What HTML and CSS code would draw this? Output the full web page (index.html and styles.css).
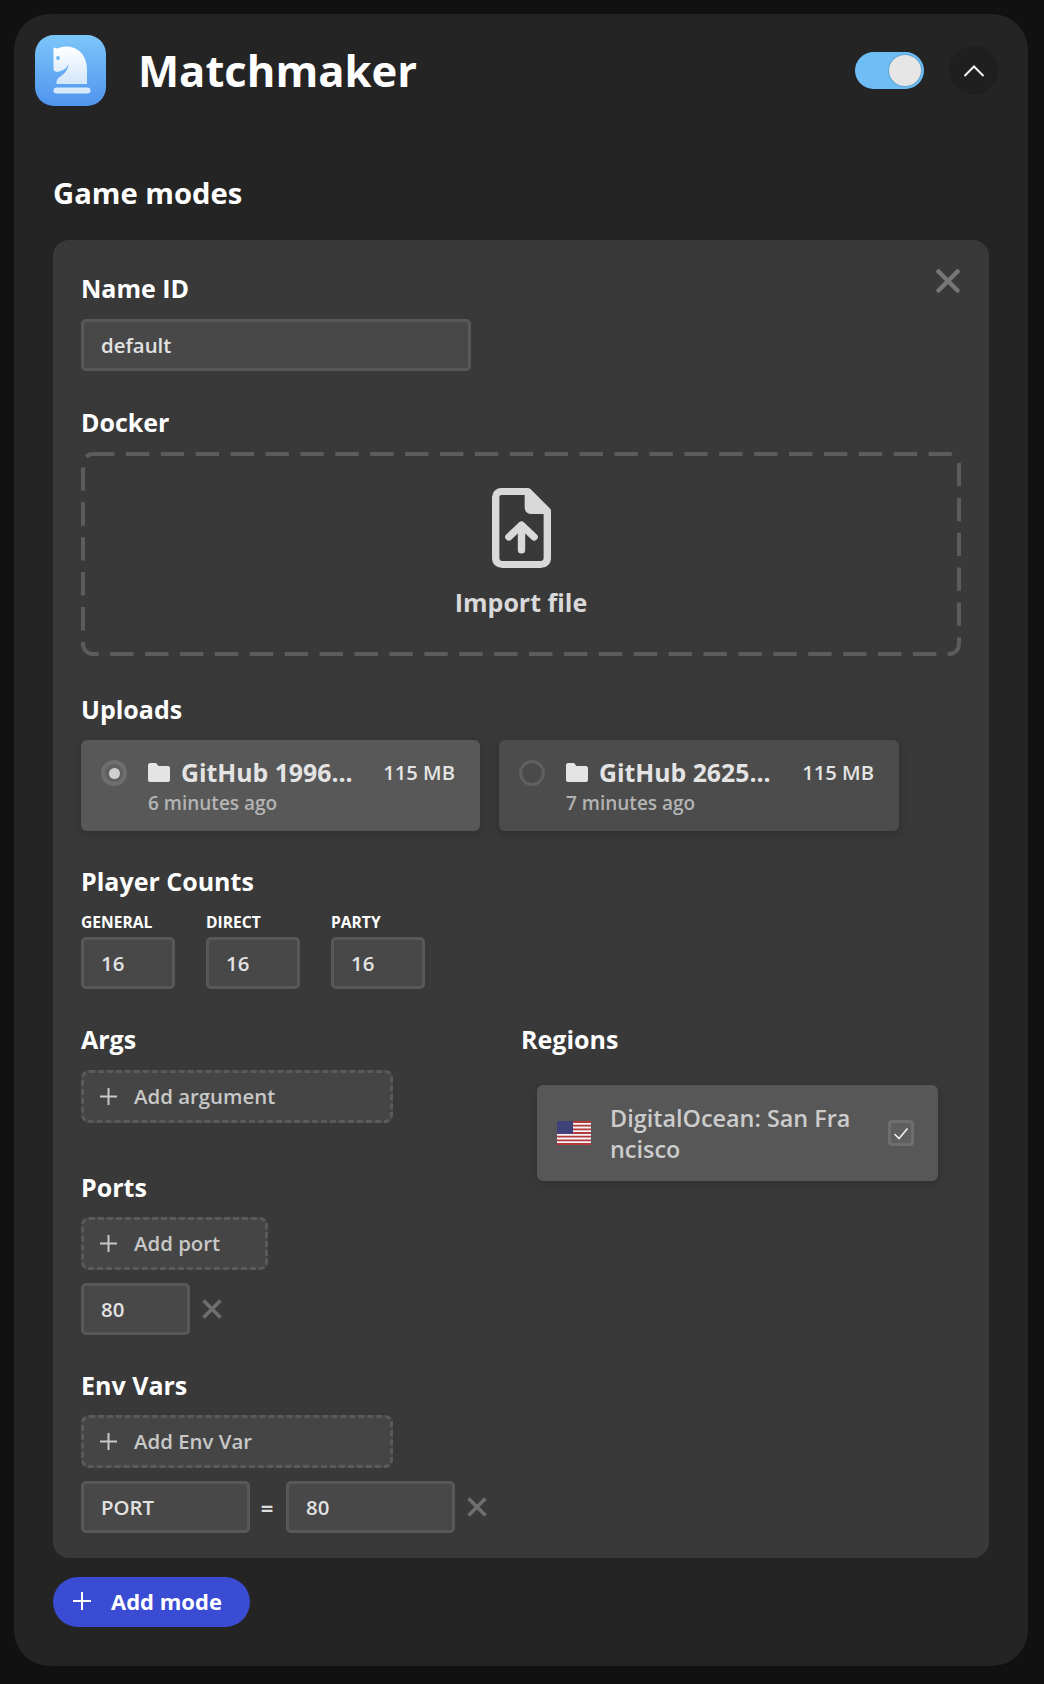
FILE: index.html
```html
<!DOCTYPE html>
<html lang="en">
<head>
    <meta charset="UTF-8">
    <title>Matchmaker</title>
    <link rel="stylesheet" href="styles.css">
</head>
<body>

<div class="panel">
    <div class="header">
        <svg class="logo" viewBox="0 0 71 71">
            <defs>
                <linearGradient id="logoBg" x1="0" y1="0" x2="0" y2="1">
                    <stop offset="0" stop-color="#7cc6fa"/>
                    <stop offset="1" stop-color="#4f94ee"/>
                </linearGradient>
                <linearGradient id="logoFg" x1="0" y1="0" x2="0" y2="1">
                    <stop offset="0" stop-color="#ffffff"/>
                    <stop offset="1" stop-color="#d3e6fb"/>
                </linearGradient>
            </defs>
            <rect width="71" height="71" rx="19" fill="url(#logoBg)"/>
            <path fill="url(#logoFg)" d="M18.5 12.5 L22.5 13.5 C25 12.2 28 11.5 31 11.5 C44 11.5 52 21 52 35 V49 H21.5 V47.5 C21.5 42.5 27 41 30 37.5 C32 35.2 33.3 32.5 33.5 29 C32 32.8 29.3 35 26 35.8 C24 37 22 37.2 20.5 36.5 C19 36 18.5 35 18.5 33.5 Z"/>
            <circle cx="23" cy="23" r="1.9" fill="#6db4f5"/>
            <rect x="18.5" y="52.5" width="37" height="6" rx="3" fill="#d8e9fc"/>
        </svg>
        <h1>Matchmaker</h1>
        <div class="toggle"><span class="knob"></span></div>
        <button class="collapse">
            <svg width="22" height="14" viewBox="0 0 22 14"><path d="M1.5 12 L11 2.5 L20.5 12" fill="none" stroke="#f2f2f2" stroke-width="2"/></svg>
        </button>
    </div>

    <h2>Game modes</h2>

    <div class="card">
        <svg class="close-card" width="24" height="24" viewBox="0 0 24 24"><path d="M2.5 2.5 L21.5 21.5 M21.5 2.5 L2.5 21.5" stroke="#777" stroke-width="4.5" stroke-linecap="round"/></svg>

        <label class="title">Name ID</label>
        <input class="text-input name-input" type="text" value="default">

        <label class="title docker-title">Docker</label>
        <div class="drop">
            <svg class="drop-border" width="880" height="204" viewBox="0 0 880 204">
                <rect x="2" y="2" width="876" height="200" rx="10" fill="none" stroke="#5c5c5c" stroke-width="4" stroke-dasharray="23.4 11.5" stroke-dashoffset="2"/>
            </svg>
            <svg class="file-icon" width="59" height="80" viewBox="0 0 56 80" preserveAspectRatio="none">
                <path d="M9 3.5 H34 L52.5 23 V70 C52.5 74 50 76.5 46 76.5 H10 C6 76.5 3.5 74 3.5 70 V9 C3.5 5.5 6 3.5 9 3.5 Z" fill="none" stroke="#d9d9d9" stroke-width="7" stroke-linejoin="round"/>
                <path d="M32 3 V19 C32 23 34 25 38 25 H53 Z" fill="#d9d9d9" stroke="#d9d9d9" stroke-width="2" stroke-linejoin="round"/>
                <path d="M28 62 V37 M16 49 L28 37 L40 49" fill="none" stroke="#d9d9d9" stroke-width="7" stroke-linecap="round" stroke-linejoin="round"/>
            </svg>
            <div class="drop-text">Import file</div>
        </div>

        <label class="title uploads-title">Uploads</label>
        <div class="uploads">
            <div class="upload selected">
                <span class="radio"><span class="dot"></span></span>
                <div class="upload-body">
                    <div class="upload-top">
                        <svg class="folder" width="22" height="19" viewBox="0 0 22 19"><path d="M2 0 H8 L10.5 3 H20 C21 3 22 4 22 5 V17 C22 18 21 19 20 19 H2 C1 19 0 18 0 17 V2 C0 1 1 0 2 0 Z" fill="#e4e4e4"/></svg>
                        <span class="upload-name">GitHub 1996...</span>
                        <span class="upload-size">115 MB</span>
                    </div>
                    <div class="upload-time">6 minutes ago</div>
                </div>
            </div>
            <div class="upload">
                <span class="radio"></span>
                <div class="upload-body">
                    <div class="upload-top">
                        <svg class="folder" width="22" height="19" viewBox="0 0 22 19"><path d="M2 0 H8 L10.5 3 H20 C21 3 22 4 22 5 V17 C22 18 21 19 20 19 H2 C1 19 0 18 0 17 V2 C0 1 1 0 2 0 Z" fill="#e4e4e4"/></svg>
                        <span class="upload-name">GitHub 2625...</span>
                        <span class="upload-size">115 MB</span>
                    </div>
                    <div class="upload-time">7 minutes ago</div>
                </div>
            </div>
        </div>

        <label class="title counts-title">Player Counts</label>
        <div class="counts">
            <div class="count">
                <div class="count-label">GENERAL</div>
                <input class="text-input count-input" type="text" value="16">
            </div>
            <div class="count">
                <div class="count-label">DIRECT</div>
                <input class="text-input count-input" type="text" value="16">
            </div>
            <div class="count">
                <div class="count-label">PARTY</div>
                <input class="text-input count-input" type="text" value="16">
            </div>
        </div>

        <div class="columns">
            <div class="col-left">
                <label class="title">Args</label>
                <button class="add-btn wide">
                    <svg width="17" height="17" viewBox="0 0 17 17"><path d="M8.5 0 V17 M0 8.5 H17" stroke="#c8c8c8" stroke-width="2"/></svg>
                    Add argument
                </button>

                <label class="title add-title ports-title">Ports</label>
                <button class="add-btn narrow">
                    <svg width="17" height="17" viewBox="0 0 17 17"><path d="M8.5 0 V17 M0 8.5 H17" stroke="#c8c8c8" stroke-width="2"/></svg>
                    Add port
                </button>
                <div class="row">
                    <input class="text-input port-input" type="text" value="80">
                    <svg class="remove" width="20" height="20" viewBox="0 0 20 20"><path d="M1.5 1.5 L18.5 18.5 M18.5 1.5 L1.5 18.5" stroke="#6f6f6f" stroke-width="3.6"/></svg>
                </div>

                <label class="title add-title env-title">Env Vars</label>
                <button class="add-btn wide">
                    <svg width="17" height="17" viewBox="0 0 17 17"><path d="M8.5 0 V17 M0 8.5 H17" stroke="#c8c8c8" stroke-width="2"/></svg>
                    Add Env Var
                </button>
                <div class="row">
                    <input class="text-input env-input" type="text" value="PORT">
                    <span class="equals">=</span>
                    <input class="text-input env-input" type="text" value="80">
                    <svg class="remove" width="20" height="20" viewBox="0 0 20 20"><path d="M1.5 1.5 L18.5 18.5 M18.5 1.5 L1.5 18.5" stroke="#6f6f6f" stroke-width="3.6"/></svg>
                </div>
            </div>

            <div class="col-right">
                <label class="title">Regions</label>
                <div class="region">
                    <svg class="flag" width="34" height="24" viewBox="0 0 34 24">
                        <rect width="34" height="24" fill="#f4f4f4"/>
                        <path d="M0 0 H34 V2 H0 Z M0 3.7 H34 V5.5 H0 Z M0 7.4 H34 V9.2 H0 Z M0 11.1 H34 V12.9 H0 Z M0 14.8 H34 V16.6 H0 Z M0 18.5 H34 V20.3 H0 Z M0 22 H34 V24 H0 Z" fill="#b4393f"/>
                        <rect width="16" height="12.9" fill="#3f4279"/>
                    </svg>
                    <div class="region-name">DigitalOcean: San Francisco</div>
                    <span class="check">
                        <svg width="16" height="13" viewBox="0 0 16 13"><path d="M1.5 7 L6 11.5 L14.5 1.5" fill="none" stroke="#eee" stroke-width="1.7"/></svg>
                    </span>
                </div>
            </div>
        </div>
    </div>

    <button class="add-mode">
        <svg width="18" height="18" viewBox="0 0 18 18"><path d="M9 0 V18 M0 9 H18" stroke="#fff" stroke-width="2"/></svg>
        Add mode
    </button>
</div>

</body>
</html>
```

FILE: styles.css
```css
* {
    box-sizing: border-box;
}

body {
    font-family: "Open Sans", sans-serif;
    background-color: #111;
    margin: 0;
    padding: 14px 16px 18px 14px;
}

button {
    font-family: inherit;
    cursor: pointer;
}

.panel {
    background: #242424;
    border-radius: 36px;
    padding: 21px 39px 39px 39px;
    height: 1652px;
}

.header {
    display: flex;
    align-items: center;
    margin-left: -18px;
    margin-right: -9px;
    height: 71px;
}

.logo {
    width: 71px;
    height: 71px;
    flex-shrink: 0;
}

h1 {
    color: #fff;
    font-size: 43.6px;
    font-weight: 700;
    line-height: 60px;
    margin: -1px 0 0 32px;
    flex: 1;
}

.toggle {
    width: 69px;
    height: 37px;
    border-radius: 19px;
    background: #6ebef5;
    padding: 3px 3px 3px 34px;
}

.knob {
    display: block;
    width: 32px;
    height: 31px;
    border-radius: 50%;
    background: #e6e6e6;
    box-shadow: 0 0 2px rgba(0, 0, 0, 0.4);
}

.collapse {
    width: 49px;
    height: 49px;
    border-radius: 50%;
    border: none;
    background: #1f1f1f;
    margin-left: 25px;
    padding: 0;
    display: flex;
    align-items: center;
    justify-content: center;
}

h2 {
    color: #fff;
    font-size: 29.2px;
    font-weight: 700;
    line-height: 38px;
    margin: 68px 0 28px 0;
}

.card {
    position: relative;
    background: #393939;
    border-radius: 16px;
    padding: 33px 28px 25px 28px;
}

.close-card {
    position: absolute;
    top: 29px;
    right: 29px;
}

.title {
    display: block;
    color: #fff;
    font-size: 25px;
    font-weight: 700;
    line-height: 30px;
    margin-bottom: 16px;
}

.docker-title {
    margin-top: 36px;
    margin-bottom: 15px;
}

.uploads-title {
    margin-top: 38px;
}

.counts-title {
    margin-top: 35px;
}

.add-title {
    margin-bottom: 15px;
}

.ports-title {
    margin-top: 49px;
}

.env-title {
    margin-top: 35px;
}

.text-input {
    display: block;
    height: 52px;
    background: #484848;
    border: 3px solid #585858;
    border-radius: 5px;
    color: #e2e2e2;
    font-family: inherit;
    font-size: 20.4px;
    font-weight: 600;
    padding: 0 17px;
    outline: none;
}

.name-input {
    width: 390px;
}

.drop {
    position: relative;
    height: 204px;
    width: 880px;
    text-align: center;
    padding-top: 36px;
}

.drop-border {
    position: absolute;
    top: 0;
    left: 0;
}

.file-icon {
    display: block;
    margin: 0 auto;
}

.drop-text {
    color: #d9d9d9;
    font-size: 25px;
    font-weight: 700;
    line-height: 32px;
    margin-top: 18px;
}

.uploads {
    display: flex;
    gap: 19px;
}

.upload {
    width: 400px;
    height: 91px;
    background: #4c4c4c;
    border-radius: 6px;
    box-shadow: 0 3px 12px rgba(0, 0, 0, 0.2);
    display: flex;
    padding: 19px 25px 0 20px;
}

.upload.selected {
    width: 399px;
    background: #585858;
}

.radio {
    width: 26px;
    height: 26px;
    border-radius: 50%;
    border: 3px solid #5f5f5f;
    background: #4a4a4a;
    display: flex;
    align-items: center;
    justify-content: center;
    flex-shrink: 0;
    margin: 1px 21px 0 0;
}

.selected .radio {
    background: #606060;
    border: 4px solid #6e6e6e;
}

.dot {
    width: 11px;
    height: 11px;
    border-radius: 50%;
    background: #cfcfcf;
}

.upload-body {
    flex: 1;
}

.upload-top {
    display: flex;
    align-items: center;
    height: 26px;
}

.folder {
    margin-right: 11px;
}

.upload-name {
    color: #e4e4e4;
    font-size: 24.8px;
    font-weight: 700;
    flex: 1;
    white-space: nowrap;
}

.upload-size {
    color: #e4e4e4;
    font-size: 20.2px;
    font-weight: 600;
}

.upload-time {
    color: #b4b4b4;
    font-size: 19px;
    font-weight: 600;
    line-height: 26px;
    margin-top: 5px;
}

.counts {
    display: flex;
    gap: 31px;
}

.count-label {
    color: #fff;
    font-size: 15.6px;
    font-weight: 700;
    line-height: 20px;
    margin-bottom: 5px;
}

.count-input {
    width: 94px;
}

.columns {
    display: grid;
    grid-template-columns: 440px 1fr;
    margin-top: 35px;
}

.add-btn {
    display: flex;
    align-items: center;
    height: 53px;
    background: #454545;
    border: 3px dashed #5a5a5a;
    border-radius: 8px;
    color: #c8c8c8;
    font-size: 20.4px;
    font-weight: 600;
    padding: 0 0 1px 16px;
}

.add-btn svg {
    margin-right: 17px;
}

.wide {
    width: 312px;
}

.narrow {
    width: 187px;
}

.row {
    display: flex;
    align-items: center;
    margin-top: 13px;
}

.port-input {
    width: 109px;
}

.env-input {
    width: 169px;
}

.remove {
    margin-left: 12px;
}

.equals {
    color: #ddd;
    font-size: 22px;
    font-weight: 700;
    width: 36px;
    padding-right: 2px;
    text-align: center;
}

.region {
    width: 401px;
    height: 96px;
    margin: 31px 0 0 16px;
    background: #575757;
    border-radius: 6px;
    box-shadow: 0 3px 12px rgba(0, 0, 0, 0.15);
    display: flex;
    align-items: center;
    padding: 0 24px 0 20px;
}

.flag {
    flex-shrink: 0;
    margin-right: 19px;
}

.region-name {
    color: #ccc;
    font-size: 23.4px;
    font-weight: 600;
    line-height: 31px;
    width: 248px;
    padding-top: 2px;
    word-break: break-all;
}

.check {
    width: 26px;
    height: 26px;
    margin-left: auto;
    background: #5f5f5f;
    border: 3px solid #6e6e6e;
    border-radius: 4px;
    display: flex;
    align-items: center;
    justify-content: center;
}

.add-mode {
    display: flex;
    align-items: center;
    width: 197px;
    height: 50px;
    margin-top: 19px;
    background: #3a4cd3;
    border: none;
    border-radius: 25px;
    color: #fff;
    font-size: 22px;
    font-weight: 700;
    padding: 0 0 2px 20px;
}

.add-mode svg {
    margin-right: 20px;
}
```
